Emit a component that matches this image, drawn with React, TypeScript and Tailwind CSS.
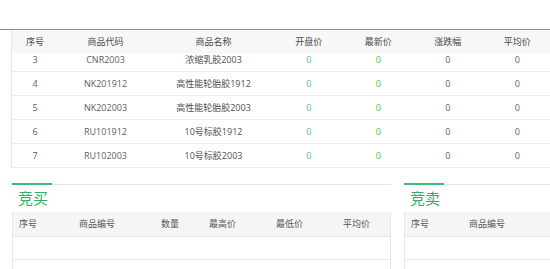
import React from 'react';

const rows = [
  { no: 3, code: 'CNR2003', name: '浓缩乳胶2003' },
  { no: 4, code: 'NK201912', name: '高性能轮胎胶1912' },
  { no: 5, code: 'NK202003', name: '高性能轮胎胶2003' },
  { no: 6, code: 'RU101912', name: '10号标胶1912' },
  { no: 7, code: 'RU102003', name: '10号标胶2003' },
];

const topCols = [
  { label: '序号', w: 'w-[46px]' },
  { label: '商品代码', w: 'w-[95px]' },
  { label: '商品名称', w: 'w-[121px]' },
  { label: '开盘价', w: 'w-[69.5px]' },
  { label: '最新价', w: 'w-[69.5px]' },
  { label: '涨跌幅', w: 'w-[69.5px]' },
  { label: '平均价', w: 'w-[69.5px]' },
];

const buyCols = [
  { label: '序号', w: 'w-[60px]' },
  { label: '商品编号', w: 'w-[82px]' },
  { label: '数量', w: 'w-[48px]' },
  { label: '最高价', w: 'w-[67px]' },
  { label: '最低价', w: 'w-[67px]' },
  { label: '平均价', w: 'flex-1' },
];

const sellCols = [
  { label: '序号', w: 'w-[58px]' },
  { label: '商品编号', w: 'w-[80px]' },
];

const SectionTable = ({ title, cols, width }: { title: string; cols: { label: string; w: string }[]; width: string }) => (
  <div className={`${width} shrink-0`}>
    <div className="flex items-end h-[2px]">
      <div className="w-[40px] h-[2px] bg-[#3db97b]" />
      <div className="flex-1 h-px bg-[#e6e6e6]" />
    </div>
    <div className="h-[27px] flex items-center pl-[6px] text-[15px] text-[#2eaf66]">{title}</div>
    <div className="border-l border-r border-[#e8e8e8]">
      <div className="flex items-center h-[25px] bg-[#f5f5f5] border-b border-[#e6e6e6] text-[9px] text-[#555]">
        {cols.map(c => (
          <div key={c.label} className={`${c.w} pl-[6px] whitespace-nowrap`}>{c.label}</div>
        ))}
      </div>
      <div className="h-[23px] border-b border-[#ececec]" />
      <div className="h-[23px] border-b border-[#ececec]" />
    </div>
  </div>
);

const App = () => {
  return (
    <div className="w-[550px] h-[269px] overflow-hidden bg-white font-['Open_Sans','Noto_Sans_CJK_SC',sans-serif]">
      <div className="h-[29px]" />
      <div className="h-px bg-[#3db97b]" />
      <div className="ml-[11px] w-[541px] border-l border-[#e8e8e8]">
        <div className="flex items-center h-[23px] bg-[#f7f7f7] text-[9px] text-[#4a4a4a]">
          {topCols.map(c => (
            <div key={c.label} className={`${c.w} shrink-0 text-center`}>{c.label}</div>
          ))}
        </div>
        <div className="h-[115px] overflow-hidden">
          <div className="-mt-[5px]">
            {rows.map(r => (
              <div key={r.no} className="flex items-center h-[24px] border-b border-[#ededed] text-[9px] text-[#606060]">
                <div className="w-[46px] shrink-0 text-center">{r.no}</div>
                <div className="w-[95px] shrink-0 text-center">{r.code}</div>
                <div className="w-[121px] shrink-0 text-center text-[#505050]">{r.name}</div>
                <div className="w-[69.5px] shrink-0 text-center text-[#4fbf80]">0</div>
                <div className="w-[69.5px] shrink-0 text-center text-[#45c247]">0</div>
                <div className="w-[69.5px] shrink-0 text-center">0</div>
                <div className="w-[69.5px] shrink-0 text-center">0</div>
              </div>
            ))}
          </div>
        </div>
      </div>
      <div className="flex mt-[15px]">
        <div className="ml-[12px]">
          <SectionTable title="竞买" cols={buyCols} width="w-[379px]" />
        </div>
        <div className="ml-[13px]">
          <SectionTable title="竞卖" cols={sellCols} width="w-[160px]" />
        </div>
      </div>
    </div>
  );
};

export default App;
